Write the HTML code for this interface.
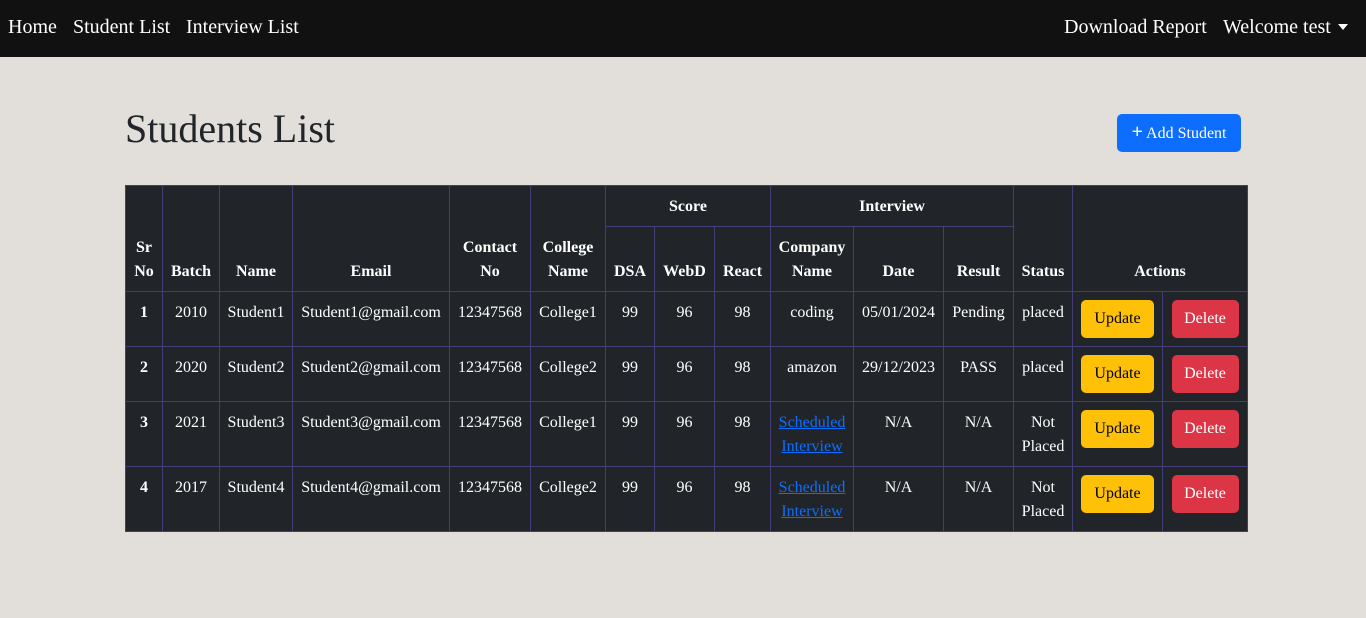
<!DOCTYPE html>
<html><head><meta charset="utf-8"><style>
*{box-sizing:border-box}
body{margin:0;background:#e2dfda;font-family:"Liberation Serif","Times New Roman",serif;width:1366px;height:618px;overflow:hidden}
.nav{height:57px;background:#111;color:#fff;font-size:20px;position:relative}
.nav span{position:absolute;top:16px}
.caret{display:inline-block;width:0;height:0;border-left:5px solid transparent;border-right:5px solid transparent;border-top:6px solid #fff;vertical-align:middle;margin-left:7px;margin-top:-3px}
h1{position:absolute;left:125px;top:105px;margin:0;font-weight:400;font-size:40px;color:#212529}
.add{position:absolute;left:1117px;top:114px;width:124px;height:38px;background:#0d6efd;border-radius:5px;color:#fff;font-size:16px;line-height:37px;text-align:center}
table{position:absolute;left:125px;top:185px;border-collapse:collapse;table-layout:fixed;width:1122px;color:#fff;background:#212529;font-size:16px}
td,th{border:1px solid #433d78;text-align:center;padding:0 4px;line-height:24px;white-space:nowrap}
th{vertical-align:bottom}
td{vertical-align:top;padding-top:9px}
td.w,th.w{white-space:normal}
.sub th{height:65px;padding-bottom:7px}
.top th{height:41px;vertical-align:middle;padding-top:2px}
.top th[rowspan]{vertical-align:bottom;padding-bottom:7px}
tr.r td{height:55px}
tr.t td{height:65px}
.b{display:inline-block;border-radius:5px;width:73px;height:38px;line-height:38px}
.u{background:#ffc107;color:#000}
.d{background:#dc3545;color:#fff;width:67px}
a{color:#0d6efd;text-decoration:underline}
td.act{padding-top:8px}
</style></head><body>
<div class="nav"><span style="left:8px">Home</span><span style="left:73px">Student List</span><span style="left:186px">Interview List</span><span style="left:1064px">Download Report</span><span style="left:1223px">Welcome test<i class="caret"></i></span></div>
<h1>Students List</h1>
<div class="add"><b style="font-size:20px">+</b> Add Student</div>
<table>
<colgroup><col style="width:37px"><col style="width:57px"><col style="width:73px"><col style="width:157px"><col style="width:81px"><col style="width:75px"><col style="width:49px"><col style="width:60px"><col style="width:56px"><col style="width:83px"><col style="width:90px"><col style="width:70px"><col style="width:59px"><col style="width:90px"><col style="width:85px"></colgroup>
<tr class="top"><th class="w" rowspan="2">Sr No</th><th rowspan="2">Batch</th><th rowspan="2">Name</th><th rowspan="2">Email</th><th class="w" rowspan="2">Contact No</th><th class="w" rowspan="2">College Name</th><th colspan="3">Score</th><th colspan="3">Interview</th><th rowspan="2">Status</th><th colspan="2" rowspan="2">Actions</th></tr>
<tr class="sub"><th>DSA</th><th>WebD</th><th>React</th><th class="w">Company Name</th><th>Date</th><th>Result</th></tr>
<tr class="r"><td><b>1</b></td><td>2010</td><td>Student1</td><td>Student1@gmail.com</td><td>12347568</td><td>College1</td><td>99</td><td>96</td><td>98</td><td>coding</td><td>05/01/2024</td><td>Pending</td><td>placed</td><td class="act"><span class="b u">Update</span></td><td class="act"><span class="b d">Delete</span></td></tr>
<tr class="r"><td><b>2</b></td><td>2020</td><td>Student2</td><td>Student2@gmail.com</td><td>12347568</td><td>College2</td><td>99</td><td>96</td><td>98</td><td>amazon</td><td>29/12/2023</td><td>PASS</td><td>placed</td><td class="act"><span class="b u">Update</span></td><td class="act"><span class="b d">Delete</span></td></tr>
<tr class="t"><td><b>3</b></td><td>2021</td><td>Student3</td><td>Student3@gmail.com</td><td>12347568</td><td>College1</td><td>99</td><td>96</td><td>98</td><td class="w"><a>Scheduled Interview</a></td><td>N/A</td><td>N/A</td><td class="w">Not Placed</td><td class="act"><span class="b u">Update</span></td><td class="act"><span class="b d">Delete</span></td></tr>
<tr class="t"><td><b>4</b></td><td>2017</td><td>Student4</td><td>Student4@gmail.com</td><td>12347568</td><td>College2</td><td>99</td><td>96</td><td>98</td><td class="w"><a>Scheduled Interview</a></td><td>N/A</td><td>N/A</td><td class="w">Not Placed</td><td class="act"><span class="b u">Update</span></td><td class="act"><span class="b d">Delete</span></td></tr>
</table>
</body></html>
